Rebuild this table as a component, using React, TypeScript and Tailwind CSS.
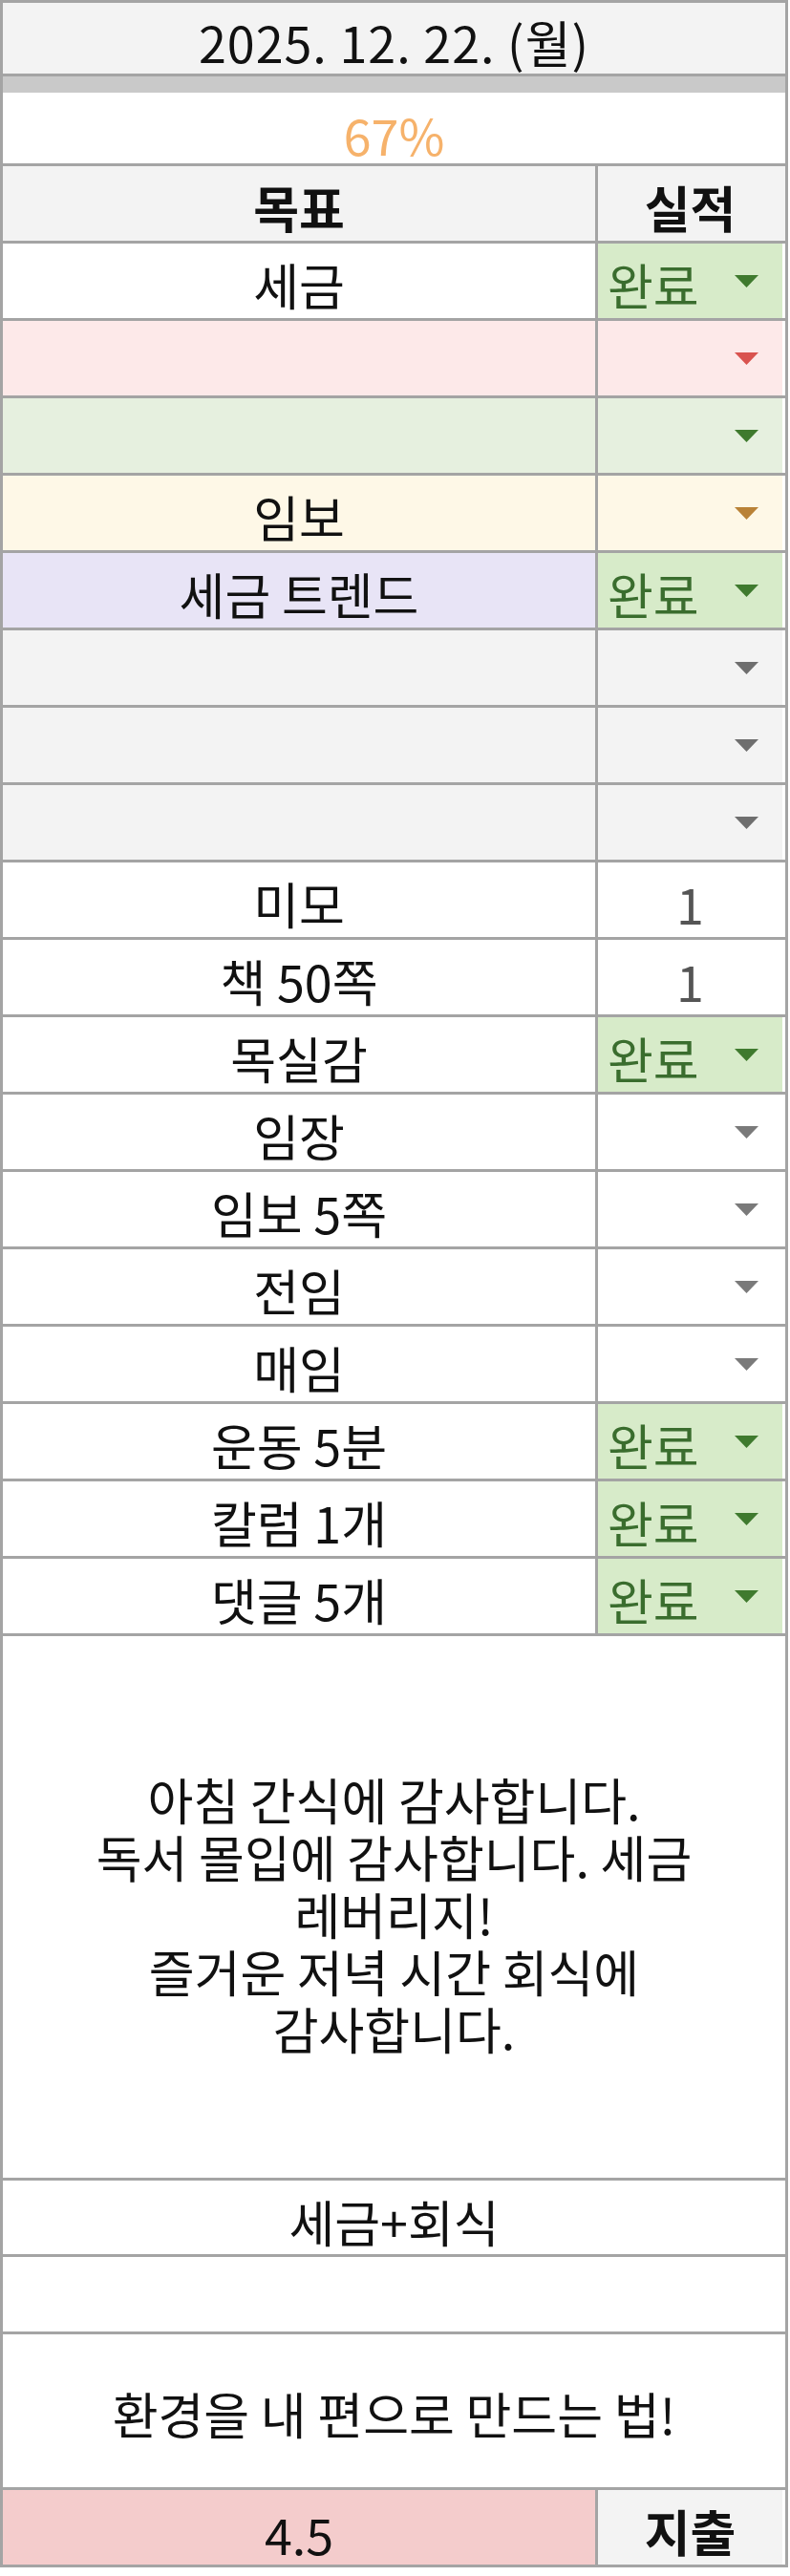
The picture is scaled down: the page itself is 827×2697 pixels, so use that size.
import { Fragment } from 'react';

type Row = {
  goal: string;
  rowBg: string;
  result?: 'done' | 'empty' | 'one';
  tri?: string;
};

const DONE_BG = 'bg-[#d7ebc9]';

const rows: Row[] = [
  { goal: '세금', rowBg: 'bg-white', result: 'done' },
  { goal: '', rowBg: 'bg-[#fde9e9]', result: 'empty', tri: 'fill-[#d9534f]' },
  { goal: '', rowBg: 'bg-[#e6f0df]', result: 'empty', tri: 'fill-[#3f7a2e]' },
  { goal: '임보', rowBg: 'bg-[#fef8e7]', result: 'empty', tri: 'fill-[#b98237]' },
  { goal: '세금 트렌드', rowBg: 'bg-[#e8e4f6]', result: 'done' },
  { goal: '', rowBg: 'bg-[#f3f3f3]', result: 'empty', tri: 'fill-[#6e6e6e]' },
  { goal: '', rowBg: 'bg-[#f3f3f3]', result: 'empty', tri: 'fill-[#6e6e6e]' },
  { goal: '', rowBg: 'bg-[#f3f3f3]', result: 'empty', tri: 'fill-[#6e6e6e]' },
  { goal: '미모', rowBg: 'bg-white', result: 'one' },
  { goal: '책 50쪽', rowBg: 'bg-white', result: 'one' },
  { goal: '목실감', rowBg: 'bg-white', result: 'done' },
  { goal: '임장', rowBg: 'bg-white', result: 'empty', tri: 'fill-[#7a7a7a]' },
  { goal: '임보 5쪽', rowBg: 'bg-white', result: 'empty', tri: 'fill-[#7a7a7a]' },
  { goal: '전임', rowBg: 'bg-white', result: 'empty', tri: 'fill-[#7a7a7a]' },
  { goal: '매임', rowBg: 'bg-white', result: 'empty', tri: 'fill-[#7a7a7a]' },
  { goal: '운동 5분', rowBg: 'bg-white', result: 'done' },
  { goal: '칼럼 1개', rowBg: 'bg-white', result: 'done' },
  { goal: '댓글 5개', rowBg: 'bg-white', result: 'done' },
];

const gratitude = [
  '아침 간식에 감사합니다.',
  '독서 몰입에 감사합니다. 세금',
  '레버리지!',
  '즐거운 저녁 시간 회식에',
  '감사합니다.',
];

function Caret({ className }: { className: string }) {
  return (
    <svg width="25" height="13" viewBox="0 0 25 13" className="shrink-0">
      <path d="M0 0 H25 L12.5 13 Z" className={className} />
    </svg>
  );
}

function ResultCell({ row }: { row: Row }) {
  if (row.result === 'done') {
    return (
      <div className={`flex w-[193px] items-center justify-between pl-[10px] pr-[25px] ${DONE_BG}`}>
        <span className="pt-[8px] text-[#3a6d2e]">완료</span>
        <Caret className="fill-[#3f7a2e]" />
      </div>
    );
  }
  if (row.result === 'one') {
    return (
      <div className={`flex w-[193px] items-center justify-center pt-[8px] ${row.rowBg} text-[#555]`}>
        1
      </div>
    );
  }
  return (
    <div className={`flex w-[193px] items-center justify-end pr-[25px] ${row.rowBg}`}>
      <Caret className={row.tri ?? 'fill-[#6e6e6e]'} />
    </div>
  );
}

export default function App() {
  return (
    <main className="min-h-screen bg-white font-['Noto_Sans_CJK_KR','Noto_Sans',sans-serif] text-[52px] leading-none text-[#111]">
      <div className="flex w-[825px] flex-col border-[3px] border-[#a4a4a4]">
        <div className="flex h-[77px] items-center justify-center border-b-[3px] border-[#a4a4a4] bg-[#f3f3f3] pt-[8px] tracking-[1px]">
          2025. 12. 22. (월)
        </div>
        <div className="h-[17px] bg-[#c9c9c9]" />
        <div className="flex h-[77px] items-center justify-center border-b-[3px] border-[#a4a4a4] bg-white pt-[14px] text-[#f6b26b]">
          67%
        </div>
        <div className="flex h-[81px] border-b-[3px] border-[#a4a4a4] bg-[#f3f3f3] font-bold">
          <div className="flex w-[623px] items-center justify-center border-r-[3px] border-[#a4a4a4] pt-[7px]">목표</div>
          <div className="flex w-[193px] items-center justify-center pt-[7px]">실적</div>
        </div>
        {rows.map((row, i) => (
          <Fragment key={i}>
            <div className="flex h-[81px] border-b-[3px] border-[#a4a4a4]">
              <div className={`flex w-[623px] items-center justify-center border-r-[3px] border-[#a4a4a4] pt-[8px] ${row.rowBg}`}>
                {row.goal}
              </div>
              <ResultCell row={row} />
            </div>
          </Fragment>
        ))}
        <div className="flex h-[570px] flex-col items-center justify-center border-b-[3px] border-[#a4a4a4] bg-white pt-[14px] leading-[60px]">
          {gratitude.map((line) => (
            <div key={line}>{line}</div>
          ))}
        </div>
        <div className="flex h-[80px] items-center justify-center border-b-[3px] border-[#a4a4a4] bg-white pt-[8px]">
          세금+회식
        </div>
        <div className="h-[81px] border-b-[3px] border-[#a4a4a4] bg-white" />
        <div className="flex h-[163px] items-center justify-center border-b-[3px] border-[#a4a4a4] bg-white pt-[6px]">
          환경을 내 편으로 만드는 법!
        </div>
        <div className="flex h-[78px]">
          <div className="flex w-[623px] items-center justify-center border-r-[3px] border-[#a4a4a4] bg-[#f4cccc] pt-[14px]">4.5</div>
          <div className="flex w-[193px] items-center justify-center bg-[#f3f3f3] pt-[8px] font-bold">지출</div>
        </div>
      </div>
    </main>
  );
}
